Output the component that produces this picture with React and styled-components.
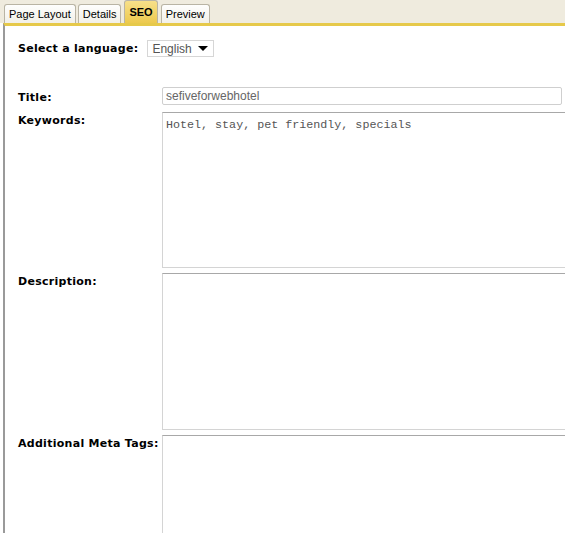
import React from "react"
import styled, { createGlobalStyle } from "styled-components"

const Global = createGlobalStyle`
	body {
		margin: 0;
		background: #ffffff;
		font-family: "DejaVu Sans", Verdana, sans-serif;
	}
`

const Page = styled.div`
	width: 565px;
	height: 533px;
	overflow: hidden;
	display: flex;
	flex-direction: column;
`

const TabBar = styled.div`
	display: flex;
	align-items: flex-end;
	gap: 2px;
	height: 25px;
	padding-left: 4px;
	background: #efebde;
`

const Tab = styled.div`
	display: flex;
	align-items: center;
	height: ${(p) => (p.active ? "23px" : "19px")};
	padding: 0 ${(p) => (p.active ? "4px" : "4px")};
	margin: 0 ${(p) => (p.active ? "1px" : "0")};
	box-sizing: border-box;
	border: 1px solid #b9b4a4;
	border-bottom: none;
	border-radius: 3px 3px 0 0;
	background: ${(p) =>
		p.active
			? "linear-gradient(#f7e08a, #ecc94e)"
			: "linear-gradient(#fefefd, #f2f0e8)"};
	font-family: "Liberation Sans", Arial, sans-serif;
	font-size: 11px;
	font-weight: ${(p) => (p.active ? "bold" : "normal")};
	color: #000;
`

const Panel = styled.div`
	flex: 1;
	border-top: 3px solid #e6c94a;
	border-left: 2px solid #9a9a9a;
	margin-left: 3px;
	padding: 14px 0 0 13px;
	display: flex;
	flex-direction: column;
`

const LangRow = styled.div`
	display: flex;
	align-items: center;
	gap: 9px;
	margin-bottom: 30px;
`

const Label = styled.label`
	font-size: 11px;
	font-weight: bold;
	letter-spacing: 0.28px;
	color: #000;
	line-height: 13px;
`

const Select = styled.div`
	display: flex;
	align-items: center;
	justify-content: space-between;
	width: 67px;
	height: 17px;
	box-sizing: border-box;
	border: 1px solid #d6d6d6;
	padding: 0 3px 0 4px;
	font-family: "Liberation Sans", Arial, sans-serif;
	font-size: 12px;
	color: #555;
`

const Arrow = styled.span`
	width: 0;
	height: 0;
	border-left: 5px solid transparent;
	border-right: 5px solid transparent;
	border-top: 5px solid #000;
	margin-right: 2px;
`

const Row = styled.div`
	display: grid;
	grid-template-columns: 144px 1fr;
	margin-bottom: ${(p) => p.gap || 5}px;
`

const RowLabel = styled(Label)`
	padding-top: ${(p) => p.top || 2}px;
`

const Input = styled.div`
	width: 400px;
	height: 18px;
	box-sizing: border-box;
	border: 1px solid #cfcfcf;
	border-radius: 2px;
	padding: 2px 3px;
	font-family: "Liberation Sans", Arial, sans-serif;
	font-size: 12px;
	line-height: 13px;
	color: #666;
`

const TextArea = styled.div`
	width: 420px;
	height: ${(p) => p.h}px;
	box-sizing: border-box;
	border: 1px solid #d4d4d4;
	border-top-color: #a8a8a8;
	padding: 5px 3px;
	font-family: "Liberation Mono", "Courier New", monospace;
	font-size: 11.7px;
	color: #555;
	white-space: pre;
`

export default function App() {
	return (
		<Page>
			<Global />
			<TabBar>
				<Tab>Page Layout</Tab>
				<Tab>Details</Tab>
				<Tab active>SEO</Tab>
				<Tab>Preview</Tab>
			</TabBar>
			<Panel>
				<LangRow>
					<Label>Select a language:</Label>
					<Select>
						English
						<Arrow />
					</Select>
				</LangRow>
				<Row gap={7}>
					<RowLabel top={4}>Title:</RowLabel>
					<Input>sefiveforwebhotel</Input>
				</Row>
				<Row>
					<RowLabel>Keywords:</RowLabel>
					<TextArea h={156}>Hotel, stay, pet friendly, specials</TextArea>
				</Row>
				<Row>
					<RowLabel>Description:</RowLabel>
					<TextArea h={157} />
				</Row>
				<Row>
					<RowLabel>Additional Meta Tags:</RowLabel>
					<TextArea h={120} />
				</Row>
			</Panel>
		</Page>
	)
}
